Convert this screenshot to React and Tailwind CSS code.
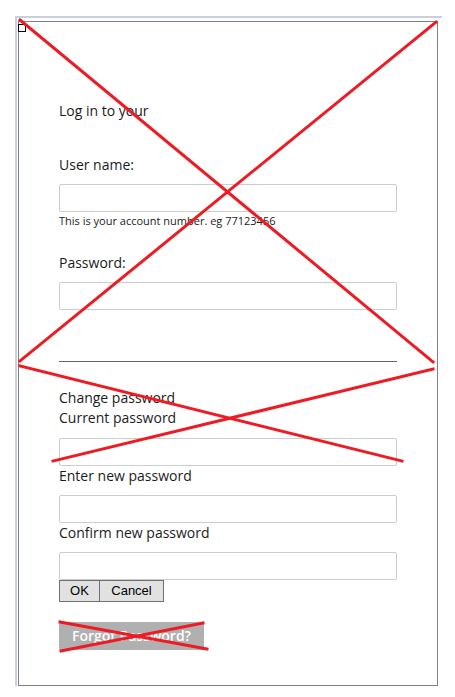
import { useState } from 'react';

const font = { fontFamily: '"Open Sans", "Noto Sans", sans-serif' };

function Field({ type = 'text', value, onChange, className = '' }) {
  return (
    <input
      type={type}
      value={value}
      onChange={(e) => onChange(e.target.value)}
      className={`block w-[338px] h-[28px] shrink-0 rounded-[2px] border border-[#cccccc] bg-white px-2 text-[14px] text-[#333] outline-none ${className}`}
    />
  );
}

export default function App() {
  const [user, setUser] = useState('');
  const [password, setPassword] = useState('');
  const [current, setCurrent] = useState('');
  const [next, setNext] = useState('');
  const [confirm, setConfirm] = useState('');

  return (
    <div className="relative h-[697px] w-[455px] bg-white text-[#1b1b1b]" style={font}>
      <div className="ml-[15px] pt-[16px]">
        <div className="w-[427px] border-t-2 border-l-2 border-[#c8d0e0] pt-[3px] pl-px">
          <div className="relative flex h-[665px] w-[420px] flex-col border border-[#808080] px-10 text-[14px] leading-[20px]">
            {/* broken image placeholder */}
            <div className="absolute left-[-1px] top-[2px] h-[8px] w-[8px] border border-black bg-white" />

            <p className="mt-[79px]">Log in to your</p>

            <label className="mt-[34px]">User name:</label>
            <Field value={user} onChange={setUser} className="mt-[9px]" />
            <p className="mt-[2px] text-[11px] leading-[14px]">This is your account number. eg 77123456</p>

            <label className="mt-[25px]">Password:</label>
            <Field type="password" value={password} onChange={setPassword} className="mt-[9px]" />

            <hr className="mt-[51px] w-[338px] border-0 border-t border-[#666666]" />

            <p className="mt-[26px]">Change password</p>
            <p>Current password</p>
            <Field type="password" value={current} onChange={setCurrent} className="mt-[10px]" />

            <p>Enter new password</p>
            <Field type="password" value={next} onChange={setNext} className="mt-[9px]" />

            <p>Confirm new password</p>
            <Field type="password" value={confirm} onChange={setConfirm} className="mt-[9px]" />

            <div className="flex" style={{ fontFamily: '"Liberation Sans", Arial, sans-serif' }}>
              <button className="h-[22px] w-[41px] border border-[#707070] bg-[#e1e1e1] text-[13px] leading-[20px] text-black">
                OK
              </button>
              <button className="h-[22px] w-[64px] border border-l-0 border-[#707070] bg-[#e1e1e1] text-[13px] leading-[20px] text-black">
                Cancel
              </button>
            </div>

            <button className="mt-[20px] h-[28px] w-[145px] rounded-[2px] bg-[#b0b0b0] text-[14px] font-semibold text-white">
              Forgot Password?
            </button>
          </div>
        </div>
      </div>

      {/* red cross annotations */}
      <svg className="pointer-events-none absolute left-0 top-0" width="455" height="697">
        <g stroke="#ed1c24" strokeWidth="3" strokeLinecap="square">
          <line x1="20" y1="20" x2="433" y2="362" />
          <line x1="436" y1="22" x2="20" y2="361" />
          <line x1="20" y1="366" x2="402" y2="461" />
          <line x1="433" y1="369" x2="53" y2="461" />
          <line x1="60" y1="622" x2="207" y2="649" />
          <line x1="203" y1="623" x2="61" y2="651" />
        </g>
      </svg>
    </div>
  );
}
